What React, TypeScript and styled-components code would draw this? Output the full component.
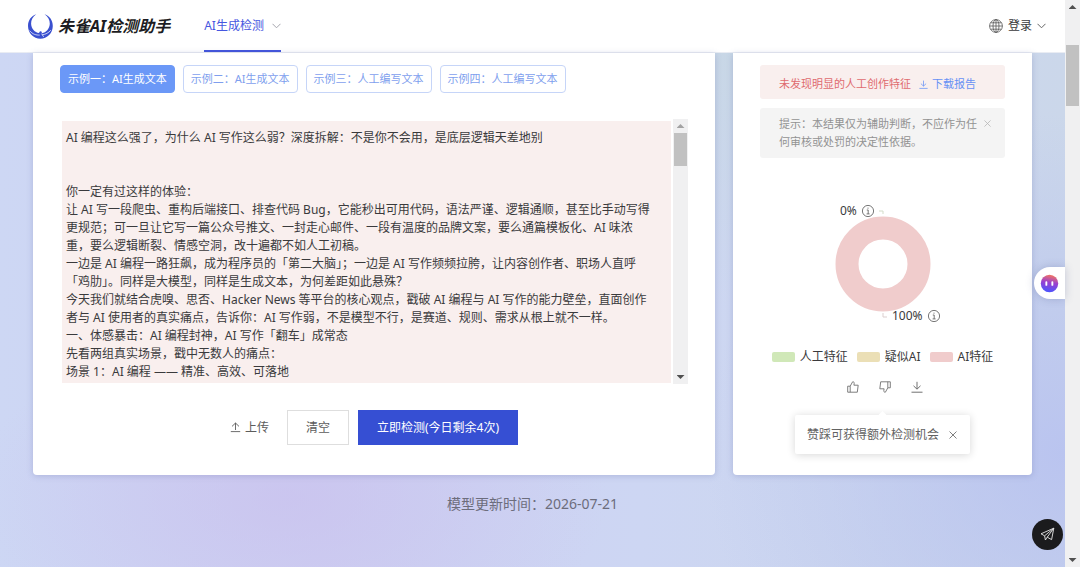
import React from "react";
import styled, { createGlobalStyle } from "styled-components";

const GlobalStyle = createGlobalStyle`
  *, *::before, *::after { box-sizing: border-box; }
  body { margin: 0; }
  body, button, textarea {
    font-family: "Noto Sans", "Noto Sans CJK SC", sans-serif;
    font-size: 12px;
    line-height: 18px;
    color: #3a3a3c;
  }
  button { margin: 0; padding: 0; border: 0; background: none; cursor: pointer; }
  a { color: inherit; text-decoration: none; }
  p { margin: 0; }
  svg { display: block; flex: none; }
`;

const Shell = styled.div`
  display: flex;
  height: 100vh;
  overflow: hidden;
`;

const Page = styled.div`
  flex: 1;
  min-width: 0;
  display: flex;
  flex-direction: column;
  background:
    radial-gradient(ellipse 320px 170px at 27% 88%, rgba(201, 190, 237, 0.6), rgba(201, 190, 237, 0) 100%),
    radial-gradient(ellipse 260px 260px at 70% 8%, rgba(199, 215, 228, 0.9), rgba(199, 215, 228, 0) 100%),
    radial-gradient(ellipse 360px 340px at 100% 80%, rgba(184, 194, 240, 0.9), rgba(184, 194, 240, 0) 100%),
    linear-gradient(90deg, #cdd7f4 0%, #cdd0f2 30%, #cdd6f3 60%, #cbd7ea 100%);
`;

const Header = styled.header`
  display: flex;
  align-items: center;
  justify-content: space-between;
  height: 53px;
  padding: 0 19px 0 27px;
  background: #fff;
  border-bottom: 1px solid #e9ecf3;
`;

const HeaderGroup = styled.div`
  display: flex;
  align-items: stretch;
  height: 100%;
  gap: 34px;
`;

const Brand = styled.a`
  display: flex;
  align-items: center;
  gap: 4px;
  font-size: 16px;
  font-weight: 700;
  font-style: italic;
  line-height: 24px;
  color: #1c1c22;
`;

const NavItem = styled.button`
  display: flex;
  align-items: center;
  gap: 8px;
  border-top: 2px solid transparent;
  border-bottom: 2px solid #4355dc;
  color: #4656e0;
`;

const LoginButton = styled.button`
  display: flex;
  align-items: center;
  gap: 5px;
`;

const Columns = styled.main`
  display: grid;
  grid-template-columns: minmax(0, 682fr) minmax(0, 299fr);
  gap: 18px;
  padding: 0 33px;
`;

const Card = styled.section`
  display: flex;
  flex-direction: column;
  height: 422px;
  padding: 12px 27px 0;
  background: #fff;
  border-radius: 0 0 4px 4px;
  box-shadow: 0 1px 6px rgba(90, 100, 160, 0.28);
`;

const Examples = styled.div`
  display: flex;
  gap: 8px;
`;

const ExampleButton = styled.button<{ $active?: boolean }>`
  height: 28px;
  padding: 0 7px;
  border: 1px solid ${(p) => (p.$active ? "#6b98f7" : "#c6d5f8")};
  border-radius: 4px;
  background: ${(p) => (p.$active ? "#6b98f7" : "#fff")};
  color: ${(p) => (p.$active ? "#fff" : "#7f9fee")};
  font-size: 11px;
  white-space: nowrap;
`;

const Editor = styled.div`
  display: flex;
  gap: 2px;
  height: 265px;
  margin-top: 26px;
  padding-left: 2px;
`;

const TextBox = styled.textarea`
  flex: 1;
  min-width: 0;
  height: 262px;
  margin: 2px 0 0;
  padding: 8px 17px 0 4px;
  border: 0;
  outline: 0;
  resize: none;
  overflow: hidden;
  background: #f9efee;
`;

const ScrollTrack = styled.div`
  flex: none;
  display: flex;
  flex-direction: column;
  width: 15px;
  padding: 5px 0;
  background: #f0f0f1;
`;

const ScrollThumb = styled.div<{ $top: number; $size: number }>`
  height: ${(p) => p.$size}px;
  margin: ${(p) => p.$top}px 1px auto;
  background: #c1c1c1;
`;

const ScrollArrow = styled.span<{ $down?: boolean; $muted?: boolean }>`
  align-self: center;
  width: 8px;
  height: 4px;
  background: ${(p) => (p.$muted ? "#a3a3a3" : "#505050")};
  clip-path: ${(p) =>
    p.$down ? "polygon(0 0, 100% 0, 50% 100%)" : "polygon(0 100%, 100% 100%, 50% 0)"};
`;

const Actions = styled.div`
  display: flex;
  justify-content: center;
  align-items: center;
  gap: 9px;
  margin-top: 26px;
`;

const UploadButton = styled.button`
  display: flex;
  align-items: center;
  gap: 4px;
  margin-right: 9px;
  color: #5c5c5c;
`;

const ActionButton = styled.button<{ $primary?: boolean }>`
  height: 35px;
  padding: 0 18px;
  border: 1px solid ${(p) => (p.$primary ? "#364fd3" : "#dedede")};
  background: ${(p) => (p.$primary ? "#364fd3" : "#fff")};
  color: ${(p) => (p.$primary ? "#fff" : "#5c5c5c")};
  white-space: nowrap;
`;

const Notice = styled.div<{ $tone: "alert" | "hint" }>`
  position: relative;
  display: flex;
  align-items: center;
  gap: 8px;
  padding: ${(p) => (p.$tone === "alert" ? "10px 0 6px 19px" : "7px 22px 7px 19px")};
  border-radius: 3px;
  background: ${(p) => (p.$tone === "alert" ? "#f9efee" : "#f4f4f4")};
  color: ${(p) => (p.$tone === "alert" ? "#df6b6e" : "#929292")};
  font-size: 11px;
  & + & { margin-top: 9px; }
`;

const ReportLink = styled.a`
  display: flex;
  align-items: center;
  gap: 4px;
  color: #6791f5;
`;

const NoticeClose = styled.button`
  position: absolute;
  top: 12px;
  right: 14px;
  color: #b5b5b5;
`;

const Chart = styled.svg`
  width: 120px;
  height: 130px;
  margin: 42px auto 0;
  overflow: visible;
`;

const Legend = styled.div`
  display: flex;
  justify-content: center;
  gap: 9px;
  margin-top: 18px;
  white-space: nowrap;
`;

const LegendItem = styled.span<{ $color: string }>`
  display: flex;
  align-items: center;
  gap: 5px;
  &::before {
    content: "";
    width: 23px;
    height: 10px;
    border-radius: 2px;
    background: ${(p) => p.$color};
  }
`;

const Feedback = styled.div`
  display: flex;
  justify-content: center;
  align-items: center;
  gap: 20px;
  margin-top: 15px;
  padding-left: 4px;
  color: #707070;
`;

const IconButton = styled.button`
  display: flex;
  color: #707070;
`;

const Tip = styled.div`
  position: relative;
  align-self: center;
  display: flex;
  align-items: center;
  gap: 10px;
  height: 39px;
  margin-top: 22px;
  padding: 0 13px 0 12px;
  border-radius: 2px;
  background: #fff;
  box-shadow: 0 1px 8px rgba(0, 0, 0, 0.16);
  color: #626262;
  white-space: nowrap;
  &::before {
    content: "";
    position: absolute;
    top: -4px;
    left: calc(50% - 5px);
    width: 10px;
    height: 5px;
    background: #fff;
    clip-path: polygon(0 100%, 50% 0, 100% 100%);
  }
`;

const Footer = styled.footer`
  margin-top: 20px;
  text-align: center;
  font-size: 14px;
  color: #6c6d7c;
`;

const Assistant = styled.button`
  position: fixed;
  top: 267px;
  right: 15px;
  width: 31px;
  height: 32px;
  padding-left: 6px;
  border-radius: 16px 0 0 16px;
  background: #fff;
  box-shadow: 0 0 8px rgba(60, 70, 130, 0.25);
`;

const SendButton = styled.button`
  position: fixed;
  right: 17px;
  bottom: 17px;
  display: grid;
  place-items: center;
  width: 31px;
  height: 31px;
  border-radius: 50%;
  background: #1b1b1d;
`;

const ChevronDown = ({ color }: { color: string }) => (
  <svg width="9" height="6" viewBox="0 0 9 6" fill="none" stroke={color} strokeWidth="1">
    <path d="M0.5 0.8 4.5 4.8 8.5 0.8" />
  </svg>
);

const CloseIcon = ({ size }: { size: number }) => (
  <svg width={size} height={size} viewBox="0 0 8 8" fill="none" stroke="currentColor" strokeWidth="0.9">
    <path d="M0.5 0.5 7.5 7.5M7.5 0.5 0.5 7.5" />
  </svg>
);

const DownloadIcon = ({ size }: { size: number }) => (
  <svg width={size} height={size} viewBox="0 0 12 12" fill="none" stroke="currentColor" strokeWidth="1">
    <path d="M6 0.8V8M2.5 4.8 6 8.2 9.5 4.8M0.5 11.2H11.5" />
  </svg>
);

const UploadIcon = () => (
  <svg width="11" height="11" viewBox="0 0 11 11" fill="none" stroke="currentColor" strokeWidth="0.9">
    <path d="M5.5 8V1M2 4.4 5.5 1 9 4.4M0.8 9.6H10.2" />
  </svg>
);

const ThumbIcon = ({ down }: { down?: boolean }) => (
  <svg width="12" height="12" viewBox="0 0 12 12" fill="none" stroke="currentColor" strokeWidth="0.9" strokeLinejoin="round">
    <g transform={down ? "rotate(180 6 6)" : undefined}>
      <path d="M3.2 5.2 5.6 0.8C6.9 0.7 7.4 1.5 7.2 2.5L6.9 4.2H11.2L10.3 11.2H0.7V5.2H3.2V11.2" />
    </g>
  </svg>
);

const GlobeIcon = () => (
  <svg width="14" height="14" viewBox="0 0 14 14" fill="none" stroke="#555" strokeWidth="0.8">
    <circle cx="7" cy="7" r="6.4" />
    <ellipse cx="7" cy="7" rx="3" ry="6.4" />
    <path d="M7 0.6V13.4M0.6 7H13.4M1.6 3.8H12.4M1.6 10.2H12.4" />
  </svg>
);

const Logo = () => (
  <svg width="27" height="27" viewBox="0 0 27 27">
    <path
      d="M9.2 1.3C4.2 2.8 1 7.5 1 12.9 1 20 6.6 25.7 13.4 25.7S25.8 20 25.8 12.9C25.8 7.5 22.6 2.8 17.6 1.3 21 3.7 22.9 7 22.8 10.8 22.6 15.9 18.9 19.8 15.1 20.2L14.4 18.6C13.9 18 13 18 12.6 18.7L12 20.1C7.9 19.5 4.3 15.9 4.1 10.8 4 7 5.8 3.7 9.2 1.3Z"
      fill="#3a50cf"
    />
    <path
      d="M2.6 17.6C5.6 21.4 9.2 22.2 12.7 22.1M15.2 21.8C18.7 21.4 21.5 19.9 23.8 17.2M14.5 20.6 16.7 23.9"
      fill="none"
      stroke="#fff"
      strokeWidth="0.7"
    />
  </svg>
);

const AssistantIcon = () => (
  <svg width="19" height="19" viewBox="0 0 19 19">
    <defs>
      <linearGradient id="assistantFill" x1="0.6" y1="0" x2="0.4" y2="1">
        <stop offset="0" stopColor="#f4765f" />
        <stop offset="0.45" stopColor="#9a3fd0" />
        <stop offset="1" stopColor="#4a55ff" />
      </linearGradient>
    </defs>
    <circle cx="9.5" cy="9.5" r="8.7" fill="url(#assistantFill)" />
    <rect x="5.4" y="7.2" width="1.9" height="4.6" rx="0.9" fill="#fff" />
    <rect x="11.4" y="7.2" width="1.9" height="4.6" rx="0.9" fill="#fff" />
  </svg>
);

const PlaneIcon = () => (
  <svg width="15" height="15" viewBox="0 0 15 15" fill="none" stroke="#e8e8e8" strokeWidth="0.9" strokeLinejoin="round">
    <path d="M13.8 1.2 1 6.8 4.6 8.8 13.8 1.2 11.6 12.6 7.2 10.2 13.8 1.2M4.6 8.8 5.4 13 7.2 10.2" />
  </svg>
);

const InfoMark = ({ x, y }: { x: number; y: number }) => (
  <g transform={`translate(${x} ${y})`} fill="none" stroke="#555" strokeWidth="0.8">
    <circle r="5.6" />
    <path d="M-1.2 -1H0.2V2.8M-1.4 2.9H1.6M0 -3.4V-2.3" />
  </g>
);

const examples = [
  "示例一：AI生成文本",
  "示例二：AI生成文本",
  "示例三：人工编写文本",
  "示例四：人工编写文本",
];

const legend = [
  { label: "人工特征", color: "#d0e8b8" },
  { label: "疑似AI", color: "#ebdfb6" },
  { label: "AI特征", color: "#f0cccc" },
];

const article = `AI 编程这么强了，为什么 AI 写作这么弱？深度拆解：不是你不会用，是底层逻辑天差地别


你一定有过这样的体验：
让 AI 写一段爬虫、重构后端接口、排查代码 Bug，它能秒出可用代码，语法严谨、逻辑通顺，甚至比手动写得更规范；可一旦让它写一篇公众号推文、一封走心邮件、一段有温度的品牌文案，要么通篇模板化、AI 味浓重，要么逻辑断裂、情感空洞，改十遍都不如人工初稿。
一边是 AI 编程一路狂飙，成为程序员的「第二大脑」；一边是 AI 写作频频拉胯，让内容创作者、职场人直呼「鸡肋」。同样是大模型，同样是生成文本，为何差距如此悬殊？
今天我们就结合虎嗅、思否、Hacker News 等平台的核心观点，戳破 AI 编程与 AI 写作的能力壁垒，直面创作者与 AI 使用者的真实痛点，告诉你：AI 写作弱，不是模型不行，是赛道、规则、需求从根上就不一样。
一、体感暴击：AI 编程封神，AI 写作「翻车」成常态
先看两组真实场景，戳中无数人的痛点：
场景 1：AI 编程 —— 精准、高效、可落地`;

export default function App() {
  return (
    <Shell>
      <GlobalStyle />
      <Page>
        <Header>
          <HeaderGroup>
            <Brand href="#">
              <Logo />
              朱雀AI检测助手
            </Brand>
            <NavItem type="button">
              AI生成检测
              <ChevronDown color="#a5a5ad" />
            </NavItem>
          </HeaderGroup>
          <LoginButton type="button">
            <GlobeIcon />
            登录
            <ChevronDown color="#666" />
          </LoginButton>
        </Header>

        <Columns>
          <Card aria-label="文本检测">
            <Examples>
              {examples.map((label, i) => (
                <ExampleButton type="button" key={label} $active={i === 0}>
                  {label}
                </ExampleButton>
              ))}
            </Examples>
            <Editor>
              <TextBox aria-label="待检测文本" spellCheck={false} defaultValue={article} />
              <ScrollTrack aria-hidden>
                <ScrollArrow $muted />
                <ScrollThumb $top={5} $size={33} />
                <ScrollArrow $down />
              </ScrollTrack>
            </Editor>
            <Actions>
              <UploadButton type="button">
                <UploadIcon />
                上传
              </UploadButton>
              <ActionButton type="button">清空</ActionButton>
              <ActionButton type="button" $primary>
                立即检测(今日剩余4次)
              </ActionButton>
            </Actions>
          </Card>

          <Card aria-label="检测结果">
            <Notice $tone="alert">
              未发现明显的人工创作特征
              <ReportLink href="#">
                <DownloadIcon size={9} />
                下载报告
              </ReportLink>
            </Notice>
            <Notice $tone="hint">
              <p>提示：本结果仅为辅助判断，不应作为任何审核或处罚的决定性依据。</p>
              <NoticeClose type="button" aria-label="关闭提示">
                <CloseIcon size={7} />
              </NoticeClose>
            </Notice>

            <Chart viewBox="0 0 120 130" role="img" aria-label="AI特征 100%">
              <circle cx="60" cy="64" r="36" fill="none" stroke="#f0cccc" strokeWidth="23" />
              <path d="M56 11H60V14" fill="none" stroke="#d3dcc8" />
              <path d="M60 113V117H64" fill="none" stroke="#dccfcf" />
              <text x="17" y="15" fontSize="12" fill="#3a3a3c">0%</text>
              <InfoMark x={45} y={11} />
              <text x="69" y="120" fontSize="12" fill="#3a3a3c">100%</text>
              <InfoMark x={111} y={116} />
            </Chart>
            <Legend>
              {legend.map((item) => (
                <LegendItem key={item.label} $color={item.color}>
                  {item.label}
                </LegendItem>
              ))}
            </Legend>
            <Feedback>
              <IconButton type="button" aria-label="赞">
                <ThumbIcon />
              </IconButton>
              <IconButton type="button" aria-label="踩">
                <ThumbIcon down />
              </IconButton>
              <IconButton type="button" aria-label="下载">
                <DownloadIcon size={12} />
              </IconButton>
            </Feedback>
            <Tip role="status">
              赞踩可获得额外检测机会
              <IconButton type="button" aria-label="关闭">
                <CloseIcon size={8} />
              </IconButton>
            </Tip>
          </Card>
        </Columns>

        <Footer>模型更新时间：2026-07-21</Footer>
      </Page>

      <ScrollTrack aria-hidden>
        <ScrollArrow />
        <ScrollThumb $top={36} $size={61} />
        <ScrollArrow $down />
      </ScrollTrack>

      <Assistant type="button" aria-label="智能助手">
        <AssistantIcon />
      </Assistant>
      <SendButton type="button" aria-label="反馈">
        <PlaneIcon />
      </SendButton>
    </Shell>
  );
}
